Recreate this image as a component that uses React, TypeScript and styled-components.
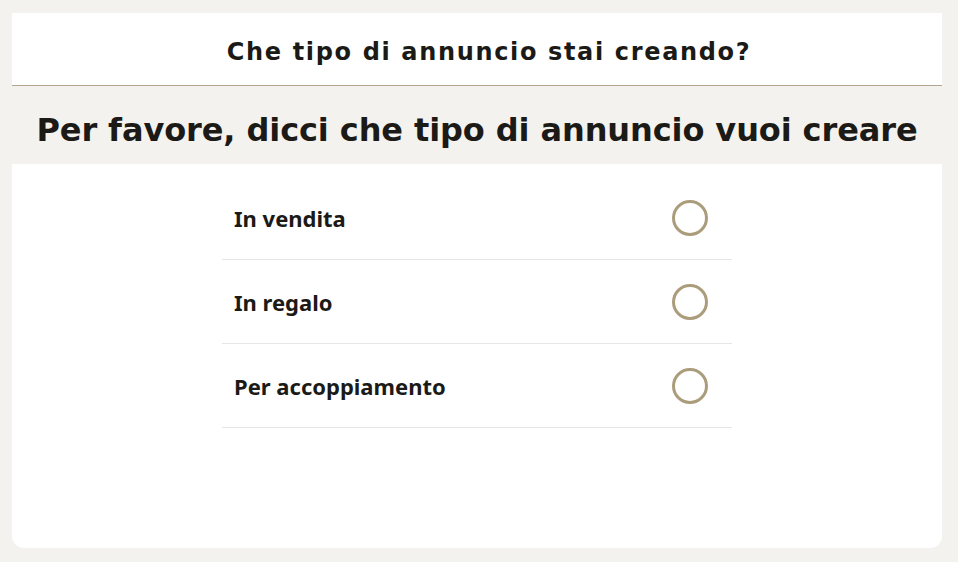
import React, { useState } from "react";
import styled, { createGlobalStyle } from "styled-components";

const GlobalStyle = createGlobalStyle`
  html, body {
    margin: 0;
    padding: 0;
    background: #f3f2ee;
  }
  body {
    font-family: "DejaVu Sans", "Liberation Sans", sans-serif;
    color: #1b1a17;
  }
`;

const Page = styled.div`
  padding: 13px 16px 14px 12px;
  box-sizing: border-box;
  height: 562px;
`;

const Card = styled.div`
  display: flex;
  flex-direction: column;
  height: 100%;
`;

const Header = styled.header`
  background: #fff;
  height: 73px;
  box-sizing: border-box;
  padding: 5px 0 0 24px;
  display: flex;
  align-items: center;
  justify-content: center;
  border-bottom: 1px solid #b3a68d;
`;

const HeaderTitle = styled.h1`
  margin: 0;
  font-family: "DejaVu Sans", sans-serif;
  font-weight: 700;
  font-size: 24px;
  letter-spacing: 1.65px;
`;

const Band = styled.div`
  height: 78px;
  box-sizing: border-box;
  padding-top: 10px;
  display: flex;
  align-items: center;
  justify-content: center;
`;

const Question = styled.h2`
  margin: 0;
  font-family: "DejaVu Sans", sans-serif;
  font-weight: 700;
  font-size: 32px;
  letter-spacing: -0.1px;
`;

const Body = styled.div`
  flex: 1;
  background: #fff;
  border-radius: 0 0 12px 12px;
  display: flex;
  justify-content: center;
  padding-top: 12px;
`;

const List = styled.ul`
  list-style: none;
  margin: 0;
  padding: 0;
  width: 510px;
`;

const Row = styled.li`
  height: 83px;
  border-bottom: 1px solid #e8e6e2;
  display: flex;
  align-items: center;
  justify-content: space-between;
  padding: 0 24px 0 12px;
  cursor: pointer;
`;

const Label = styled.span`
  font-family: "Noto Sans", sans-serif;
  font-weight: 700;
  font-size: 22px;
`;

const Radio = styled.span<{ $checked: boolean }>`
  width: 36px;
  height: 36px;
  box-sizing: border-box;
  border-radius: 50%;
  border: 3px solid #ab9d7c;
  background: ${(p) => (p.$checked ? "radial-gradient(#ab9d7c 0 8px, #fff 9px)" : "#fff")};
`;

const options = ["In vendita", "In regalo", "Per accoppiamento"];

export default function App() {
  const [selected, setSelected] = useState<number | null>(null);
  return (
    <>
      <GlobalStyle />
      <Page>
        <Card>
          <Header>
            <HeaderTitle>Che tipo di annuncio stai creando?</HeaderTitle>
          </Header>
          <Band>
            <Question>Per favore, dicci che tipo di annuncio vuoi creare</Question>
          </Band>
          <Body>
            <List>
              {options.map((o, i) => (
                <Row key={o} onClick={() => setSelected(i)}>
                  <Label>{o}</Label>
                  <Radio $checked={selected === i} />
                </Row>
              ))}
            </List>
          </Body>
        </Card>
      </Page>
    </>
  );
}
